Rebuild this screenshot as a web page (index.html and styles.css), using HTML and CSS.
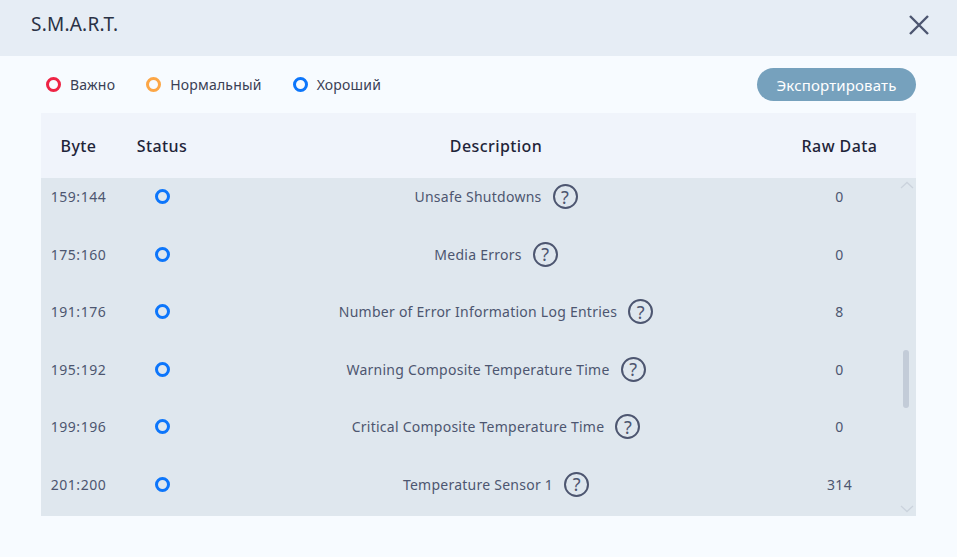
FILE: index.html
```html
<!DOCTYPE html>
<html lang="ru">
<head>
<meta charset="utf-8">
<title>S.M.A.R.T.</title>
<link rel="stylesheet" href="styles.css">
</head>
<body>
<header class="titlebar">
  <h1 class="title">S.M.A.R.T.</h1>
  <svg class="close" width="20" height="20" viewBox="0 0 20 20"><path d="M1 1 19 19M19 1 1 19"/></svg>
</header>
<main class="content">
  <div class="toolbar">
    <ul class="legend">
      <li class="legend-item"><span class="dot dot-red"></span>Важно</li>
      <li class="legend-item"><span class="dot dot-orange"></span>Нормальный</li>
      <li class="legend-item"><span class="dot dot-blue"></span>Хороший</li>
    </ul>
    <button class="export">Экспортировать</button>
  </div>
  <section class="table">
    <div class="row head">
      <div>Byte</div><div>Status</div><div>Description</div><div>Raw Data</div>
    </div>
    <div class="body">
      <div class="rows">
        <div class="row"><div class="byte">159:144</div><span class="dot dot-blue"></span><div class="desc">Unsafe Shutdowns<span class="help">?</span></div><div>0</div></div>
        <div class="row"><div class="byte">175:160</div><span class="dot dot-blue"></span><div class="desc">Media Errors<span class="help">?</span></div><div>0</div></div>
        <div class="row"><div class="byte">191:176</div><span class="dot dot-blue"></span><div class="desc">Number of Error Information Log Entries<span class="help">?</span></div><div>8</div></div>
        <div class="row"><div class="byte">195:192</div><span class="dot dot-blue"></span><div class="desc">Warning Composite Temperature Time<span class="help">?</span></div><div>0</div></div>
        <div class="row"><div class="byte">199:196</div><span class="dot dot-blue"></span><div class="desc">Critical Composite Temperature Time<span class="help">?</span></div><div>0</div></div>
        <div class="row"><div class="byte">201:200</div><span class="dot dot-blue"></span><div class="desc">Temperature Sensor 1<span class="help">?</span></div><div>314</div></div>
      </div>
      <svg class="arrow arrow-up" width="14" height="8" viewBox="0 0 14 8"><path d="M1 7 7 1.5 13 7"/></svg>
      <div class="thumb"></div>
      <svg class="arrow arrow-down" width="14" height="8" viewBox="0 0 14 8"><path d="M1 1 7 6.5 13 1"/></svg>
    </div>
  </section>
</main>
</body>
</html>
```
FILE: styles.css
```css
* { box-sizing: border-box; }
html, body { margin: 0; height: 100%; }
body {
  background: #f7fbff;
  color: #4d5670;
  font-family: "Noto Sans", "Liberation Sans", sans-serif;
  font-size: 14px;
  letter-spacing: .25px;
  overflow: hidden;
}
.titlebar {
  height: 56px;
  background: #e6edf5;
  display: flex;
  align-items: center;
  justify-content: space-between;
  padding: 0 28px 7px 31px;
}
.title {
  margin: 0 0 1px;
  font-size: 19px;
  font-weight: 400;
  letter-spacing: .22px;
  color: #2b3245;
}
.close { display: block; }
.close path { fill: none; stroke: #4d5670; stroke-width: 2.4; }
.content { padding: 12px 41px 0; }
.toolbar {
  height: 33px;
  display: flex;
  align-items: center;
  justify-content: space-between;
}
.legend {
  list-style: none;
  margin: 0;
  padding: 0 0 0 5px;
  display: flex;
  gap: 31px;
}
.legend-item {
  display: flex;
  align-items: center;
  gap: 9px;
  color: #3a4054;
  font-size: 14px;
  letter-spacing: .2px;
}
.dot {
  display: block;
  width: 15px;
  height: 15px;
  border-radius: 50%;
  border: 3px solid;
}
.dot-red { border-color: #ee2445; }
.dot-orange { border-color: #fca646; }
.dot-blue { border-color: #0d76fb; }
.export {
  width: 159px;
  height: 33px;
  border: 0;
  border-radius: 17px;
  background: #76a1bd;
  color: #fff;
  font: inherit;
  font-size: 15px;
  letter-spacing: .15px;
  padding: 0;
}
.table { margin-top: 12px; }
.row {
  display: grid;
  grid-template-columns: 75px 92px 576px 111px 21px;
  height: 57.5px;
  align-items: center;
  justify-items: center;
}
.head {
  height: 65px;
  background: #f0f4fb;
  color: #1f2439;
  font-size: 16px;
  font-weight: 500;
  letter-spacing: .42px;
}
.body {
  position: relative;
  height: 338px;
  background: #dfe7ee;
  overflow: hidden;
}
.rows { margin-top: -10px; }
.byte { letter-spacing: .55px; }
.desc { display: flex; align-items: center; gap: 11px; }
.help {
  width: 25px;
  height: 25px;
  border: 2.5px solid #4d5670;
  border-radius: 50%;
  display: flex;
  align-items: center;
  justify-content: center;
  font-size: 18px;
  letter-spacing: 0;
  line-height: 1;
}
.arrow { position: absolute; right: 2px; }
.arrow path { fill: none; stroke: #cbd3dd; stroke-width: 1.3; }
.arrow-up { top: 3px; }
.arrow-down { bottom: 3px; }
.thumb {
  position: absolute;
  top: 172px;
  right: 7px;
  width: 6px;
  height: 58px;
  border-radius: 3px;
  background: #c3ccd8;
}
```
